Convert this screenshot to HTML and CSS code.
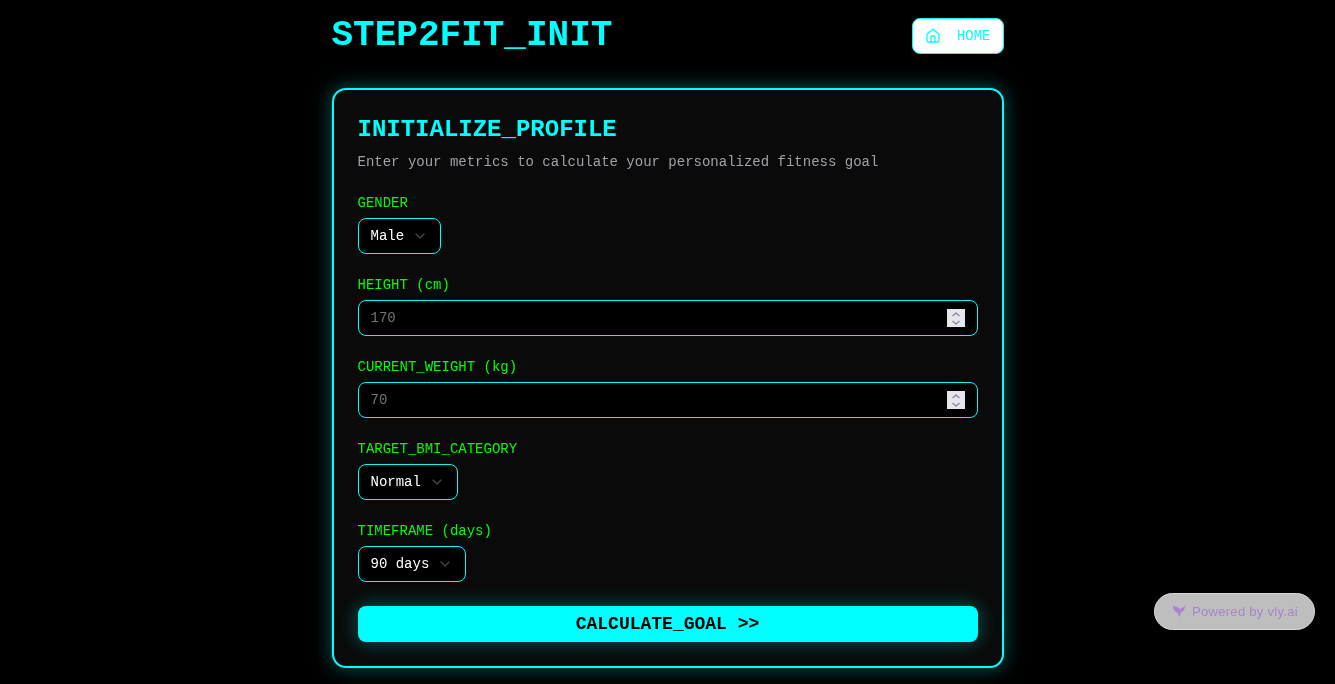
FILE: index.html
```html
<!DOCTYPE html>
<html lang="en">
<head>
<meta charset="utf-8">
<title>STEP2FIT_INIT</title>
<link rel="stylesheet" href="styles.css">
</head>
<body>
<div class="stage">
<div class="page">
  <header class="topbar">
    <h1 class="brand">STEP2FIT_INIT</h1>
    <button class="home-btn" type="button">
      <svg class="icon" viewBox="0 0 24 24"><path d="M15 21v-8a1 1 0 0 0-1-1h-4a1 1 0 0 0-1 1v8"/><path d="M3 10a2 2 0 0 1 .709-1.528l7-5.999a2 2 0 0 1 2.582 0l7 5.999A2 2 0 0 1 21 10v9a2 2 0 0 1-2 2H5a2 2 0 0 1-2-2z"/></svg>
      <span>HOME</span>
    </button>
  </header>
  <main class="card">
    <h2 class="card-title">INITIALIZE_PROFILE</h2>
    <p class="card-sub">Enter your metrics to calculate your personalized fitness goal</p>
    <form class="form">
      <div class="field">
        <label class="label">GENDER</label>
        <button class="select" type="button"><span>Male</span><svg class="icon chev" viewBox="0 0 24 24"><path d="m6 9 6 6 6-6"/></svg></button>
      </div>
      <div class="field">
        <label class="label" for="h">HEIGHT (cm)</label>
        <input class="input" id="h" type="number" placeholder="170">
      </div>
      <div class="field">
        <label class="label" for="w">CURRENT_WEIGHT (kg)</label>
        <input class="input" id="w" type="number" placeholder="70">
      </div>
      <div class="field">
        <label class="label">TARGET_BMI_CATEGORY</label>
        <button class="select" type="button"><span>Normal</span><svg class="icon chev" viewBox="0 0 24 24"><path d="m6 9 6 6 6-6"/></svg></button>
      </div>
      <div class="field">
        <label class="label">TIMEFRAME (days)</label>
        <button class="select" type="button"><span>90 days</span><svg class="icon chev" viewBox="0 0 24 24"><path d="m6 9 6 6 6-6"/></svg></button>
      </div>
      <button class="submit" type="button">CALCULATE_GOAL &gt;&gt;</button>
    </form>
  </main>
</div>
</div>
<a class="badge">
  <svg class="badge-icon" viewBox="0 0 16 16"><path d="M1.2 1.8 7 3.2l2 2 5.8-3.6-2.2 5-2.8 1.8-1.6 4.8L7 9.2 3.8 7.2z"/></svg>
  <span>Powered by vly.ai</span>
</a>
</body>
</html>
```
FILE: styles.css
```css
* {
  box-sizing: border-box;
}

html,
body {
  margin: 0;
  background: #000;
}

body {
  font-family: "Liberation Mono", monospace;
  font-size: 14px;
  overflow: hidden;
}

.stage {
  will-change: transform;
}

.page {
  width: 672px;
  margin: 0 auto;
  padding: 16px 0;
}

.topbar {
  display: flex;
  align-items: center;
  justify-content: space-between;
  margin-bottom: 32px;
}

.brand {
  margin: 0;
  font-size: 36px;
  line-height: 40px;
  font-weight: 700;
  color: #0ff;
}

.home-btn {
  display: flex;
  align-items: center;
  gap: 16px;
  height: 36px;
  padding: 0 12px;
  background: #fff;
  border: 1px solid #0ff;
  border-radius: 8px;
  color: #0ff;
  font: inherit;
}

.icon {
  display: block;
  width: 16px;
  height: 16px;
  flex: none;
  fill: none;
  stroke: currentColor;
  stroke-width: 2;
  stroke-linecap: round;
  stroke-linejoin: round;
}

.card {
  display: flex;
  flex-direction: column;
  padding: 24px;
  background: #0a0a0a;
  border: 2px solid #0ff;
  border-radius: 14px;
  box-shadow: 0 0 20px rgba(0, 255, 255, .35);
}

.card-title {
  margin: 0 0 6px;
  font-size: 24px;
  line-height: 32px;
  font-weight: 700;
  color: #0ff;
}

.card-sub {
  margin: 0 0 24px;
  font-size: 14px;
  line-height: 20px;
  color: #a1a1aa;
}

.form {
  display: flex;
  flex-direction: column;
  gap: 24px;
}

.field {
  display: flex;
  flex-direction: column;
  align-items: flex-start;
  gap: 8px;
}

.label {
  font-size: 14px;
  line-height: 14px;
  color: #0f0;
}

.select {
  display: flex;
  align-items: center;
  gap: 8px;
  height: 36px;
  padding: 0 12px;
  background: #000;
  border: 1px solid #0ff;
  border-radius: 8px;
  color: #fff;
  font: inherit;
}

.chev {
  color: #444;
}

.input {
  width: 100%;
  height: 36px;
  padding: 4px 12px;
  background: #000;
  border: 1px solid #0ff;
  border-radius: 8px;
  color: #fff;
  font: inherit;
  outline: none;
}

.input::placeholder {
  color: #737373;
}

.input::-webkit-inner-spin-button {
  -webkit-appearance: none;
  appearance: none;
  width: 18px;
  height: 18px;
  margin: 0;
  opacity: 1;
  background: #e6e6ec url("data:image/svg+xml,%3Csvg xmlns='http://www.w3.org/2000/svg' width='18' height='18'%3E%3Cpath d='M5.5 7L9 4l3.5 3M5.5 12L9 15l3.5-3' fill='none' stroke='%238f8f9c' stroke-width='1.5'/%3E%3C/svg%3E") center no-repeat;
}

.submit {
  height: 36px;
  background: #0ff;
  border: 0;
  border-radius: 8px;
  color: #000;
  font: 700 18px/28px "Liberation Mono", monospace;
  box-shadow: 0 0 20px rgba(0, 255, 255, .35);
}

.badge {
  position: fixed;
  right: 20px;
  bottom: 54px;
  display: flex;
  align-items: center;
  gap: 5px;
  width: 161px;
  height: 37px;
  padding: 0 16px;
  background: #bebebe;
  border: 1px solid #d8d8d8;
  border-radius: 19px;
  color: #a884cc;
  font: 13px/1 "Liberation Sans", Arial, sans-serif;
  letter-spacing: .3px;
  white-space: nowrap;
  will-change: transform;
}

.badge-icon {
  width: 16px;
  height: 16px;
  flex: none;
  fill: currentColor;
}
```
